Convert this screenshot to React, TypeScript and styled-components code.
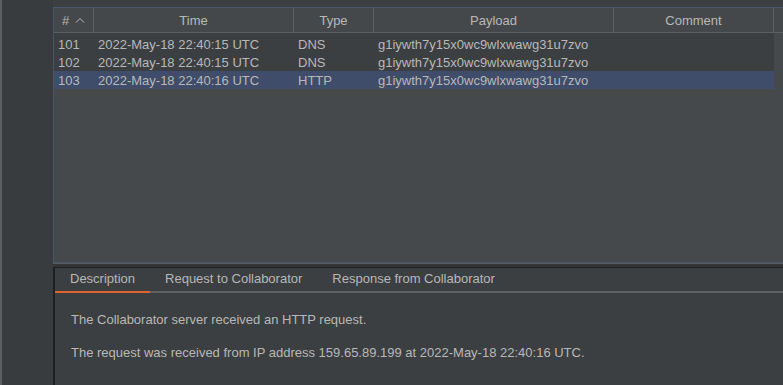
import styled, { createGlobalStyle } from "styled-components";

const GlobalStyle = createGlobalStyle`
    html, body {
        margin: 0;
        padding: 0;
        background: #3c3f41;
        overflow: hidden;
    }
    body {
        font-family: "Liberation Sans", Arial, sans-serif;
        font-size: 13px;
        color: #bbbbbb;
    }
`

const Page = styled.div`
    display: flex;
    width: 783px;
    height: 385px;
    overflow: hidden;
    background: #3c3f41;
`
const EdgeLine = styled.div`
    width: 2px;
    background: #5b5e61;
`
const Sidebar = styled.div`
    width: 51px;
    background: #393c3e;
`
const Main = styled.div`
    flex: 1;
    display: flex;
    flex-direction: column;
    padding-top: 7px;
    min-width: 0;
`
const TablePanel = styled.div`
    height: 254px;
    border: 1px solid #4a5568;
    border-right: none;
    background: #46494b;
    overflow: hidden;
`
const HeaderRow = styled.div`
    display: flex;
    height: 24px;
    border-bottom: 1px solid #5d6063;
    background: #45484a;
`
const HeaderCell = styled.div<{ $w: number }>`
    flex: 0 0 ${p => p.$w}px;
    display: flex;
    align-items: center;
    justify-content: center;
    gap: 6px;
    border-right: 1px solid #5d6063;
    box-sizing: border-box;
    color: #b8b8b8;
`
const Rows = styled.div`
    display: flex;
    flex-direction: column;
    width: 720px;
    padding-top: 2px;
    background: #3c3f41;
`
const Row = styled.div<{ $selected?: boolean }>`
    display: flex;
    height: 18px;
    align-items: center;
    background: ${p => p.$selected ? "#3f4d6a" : "#3c3f41"};
`
const Cell = styled.div<{ $w: number }>`
    flex: 0 0 ${p => p.$w}px;
    padding-left: 4px;
    box-sizing: border-box;
    white-space: nowrap;
    overflow: hidden;
    color: #b8b8b8;
`
const Divider = styled.div`
    height: 4px;
    border-top: 1px solid #585b5e;
    background: #333537;
    box-sizing: border-box;
`
const DetailPanel = styled.div`
    flex: 1;
    border-top: 1px solid #1e1f20;
    border-left: 2px solid #1e1f20;
    background: #3c3f41;
    display: flex;
    flex-direction: column;
`
const TabBar = styled.div`
    display: flex;
    height: 23px;
    border-bottom: 2px solid #5e6163;
`
const Tab = styled.div<{ $active?: boolean }>`
    padding: 0 15px 4px;
    display: flex;
    align-items: center;
    color: #b8b8b8;
    box-shadow: ${p => p.$active ? "inset 0 -2px 0 #e0642d" : "none"};
    margin-bottom: -2px;
    height: 25px;
    box-sizing: border-box;
`
const Content = styled.div`
    padding: 19px 16px;
    display: flex;
    flex-direction: column;
    gap: 18px;
    color: #b8b8b8;
    line-height: 15px;
`

const columns = [
    { key: "id", label: "#", w: 40 },
    { key: "time", label: "Time", w: 200 },
    { key: "type", label: "Type", w: 80 },
    { key: "payload", label: "Payload", w: 240 },
    { key: "comment", label: "Comment", w: 160 },
]

const data = [
    { id: "101", time: "2022-May-18 22:40:15 UTC", type: "DNS", payload: "g1iywth7y15x0wc9wlxwawg31u7zvo", comment: "" },
    { id: "102", time: "2022-May-18 22:40:15 UTC", type: "DNS", payload: "g1iywth7y15x0wc9wlxwawg31u7zvo", comment: "" },
    { id: "103", time: "2022-May-18 22:40:16 UTC", type: "HTTP", payload: "g1iywth7y15x0wc9wlxwawg31u7zvo", comment: "" },
]

const SortUp = () => (
    <svg width="10" height="6" viewBox="0 0 10 6">
        <path d="M1 5.5 L5 1.5 L9 5.5" fill="none" stroke="#b8b8b8" strokeWidth="1" />
    </svg>
)

type RowData = typeof data[number]

const App = () => {
    return <Page>
        <GlobalStyle />
        <EdgeLine />
        <Sidebar />
        <Main>
            <TablePanel>
                <HeaderRow>
                    {columns.map(c => (
                        <HeaderCell key={c.key} $w={c.w}>
                            {c.label}
                            {c.key === "id" && <SortUp />}
                        </HeaderCell>
                    ))}
                </HeaderRow>
                <Rows>
                    {data.map(r => (
                        <Row key={r.id} $selected={r.id === "103"}>
                            {columns.map(c => (
                                <Cell key={c.key} $w={c.w}>{r[c.key as keyof RowData]}</Cell>
                            ))}
                        </Row>
                    ))}
                </Rows>
            </TablePanel>
            <Divider />
            <DetailPanel>
                <TabBar>
                    <Tab $active>Description</Tab>
                    <Tab>Request to Collaborator</Tab>
                    <Tab>Response from Collaborator</Tab>
                </TabBar>
                <Content>
                    <div>The Collaborator server received an HTTP request.</div>
                    <div>The request was received from IP address 159.65.89.199 at 2022-May-18 22:40:16 UTC.</div>
                </Content>
            </DetailPanel>
        </Main>
    </Page>
}

export default App
